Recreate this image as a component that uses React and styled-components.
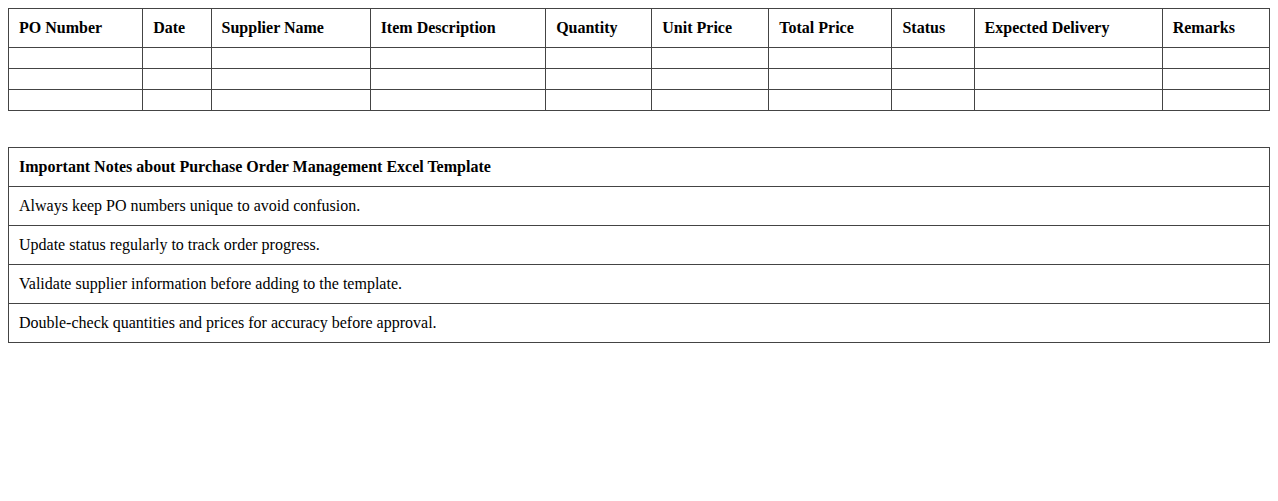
import React from 'react';
import styled, { createGlobalStyle } from 'styled-components';

const GlobalStyle = createGlobalStyle`
  body {
    margin: 8px;
    background: #fff;
    color: #000;
    font-family: "Liberation Serif", "Times New Roman", serif;
    font-size: 16px;
  }
`;

const Table = styled.table`
  width: 100%;
  border-collapse: collapse;
  margin-bottom: ${props => props.$gap || 0}px;
`;

const HeadCell = styled.th`
  border: 1px solid #444;
  padding: 10px;
  text-align: left;
  font-weight: bold;
`;

const Cell = styled.td`
  border: 1px solid #444;
  padding: 10px;
  text-align: left;
  font-weight: ${props => (props.$bold ? 'bold' : 'normal')};
`;

const columns = [
  'PO Number',
  'Date',
  'Supplier Name',
  'Item Description',
  'Quantity',
  'Unit Price',
  'Total Price',
  'Status',
  'Expected Delivery',
  'Remarks'
];

const notes = [
  'Always keep PO numbers unique to avoid confusion.',
  'Update status regularly to track order progress.',
  'Validate supplier information before adding to the template.',
  'Double-check quantities and prices for accuracy before approval.'
];

export default function App() {
  return (
    <>
      <GlobalStyle />
      <Table $gap={36}>
        <thead>
          <tr>
            {columns.map(col => (
              <HeadCell key={col}>{col}</HeadCell>
            ))}
          </tr>
        </thead>
        <tbody>
          {[0, 1, 2].map(row => (
            <tr key={row}>
              {columns.map(col => (
                <Cell key={col} />
              ))}
            </tr>
          ))}
        </tbody>
      </Table>
      <Table>
        <tbody>
          <tr>
            <Cell $bold>Important Notes about Purchase Order Management Excel Template</Cell>
          </tr>
          {notes.map(note => (
            <tr key={note}>
              <Cell>{note}</Cell>
            </tr>
          ))}
        </tbody>
      </Table>
    </>
  );
}
